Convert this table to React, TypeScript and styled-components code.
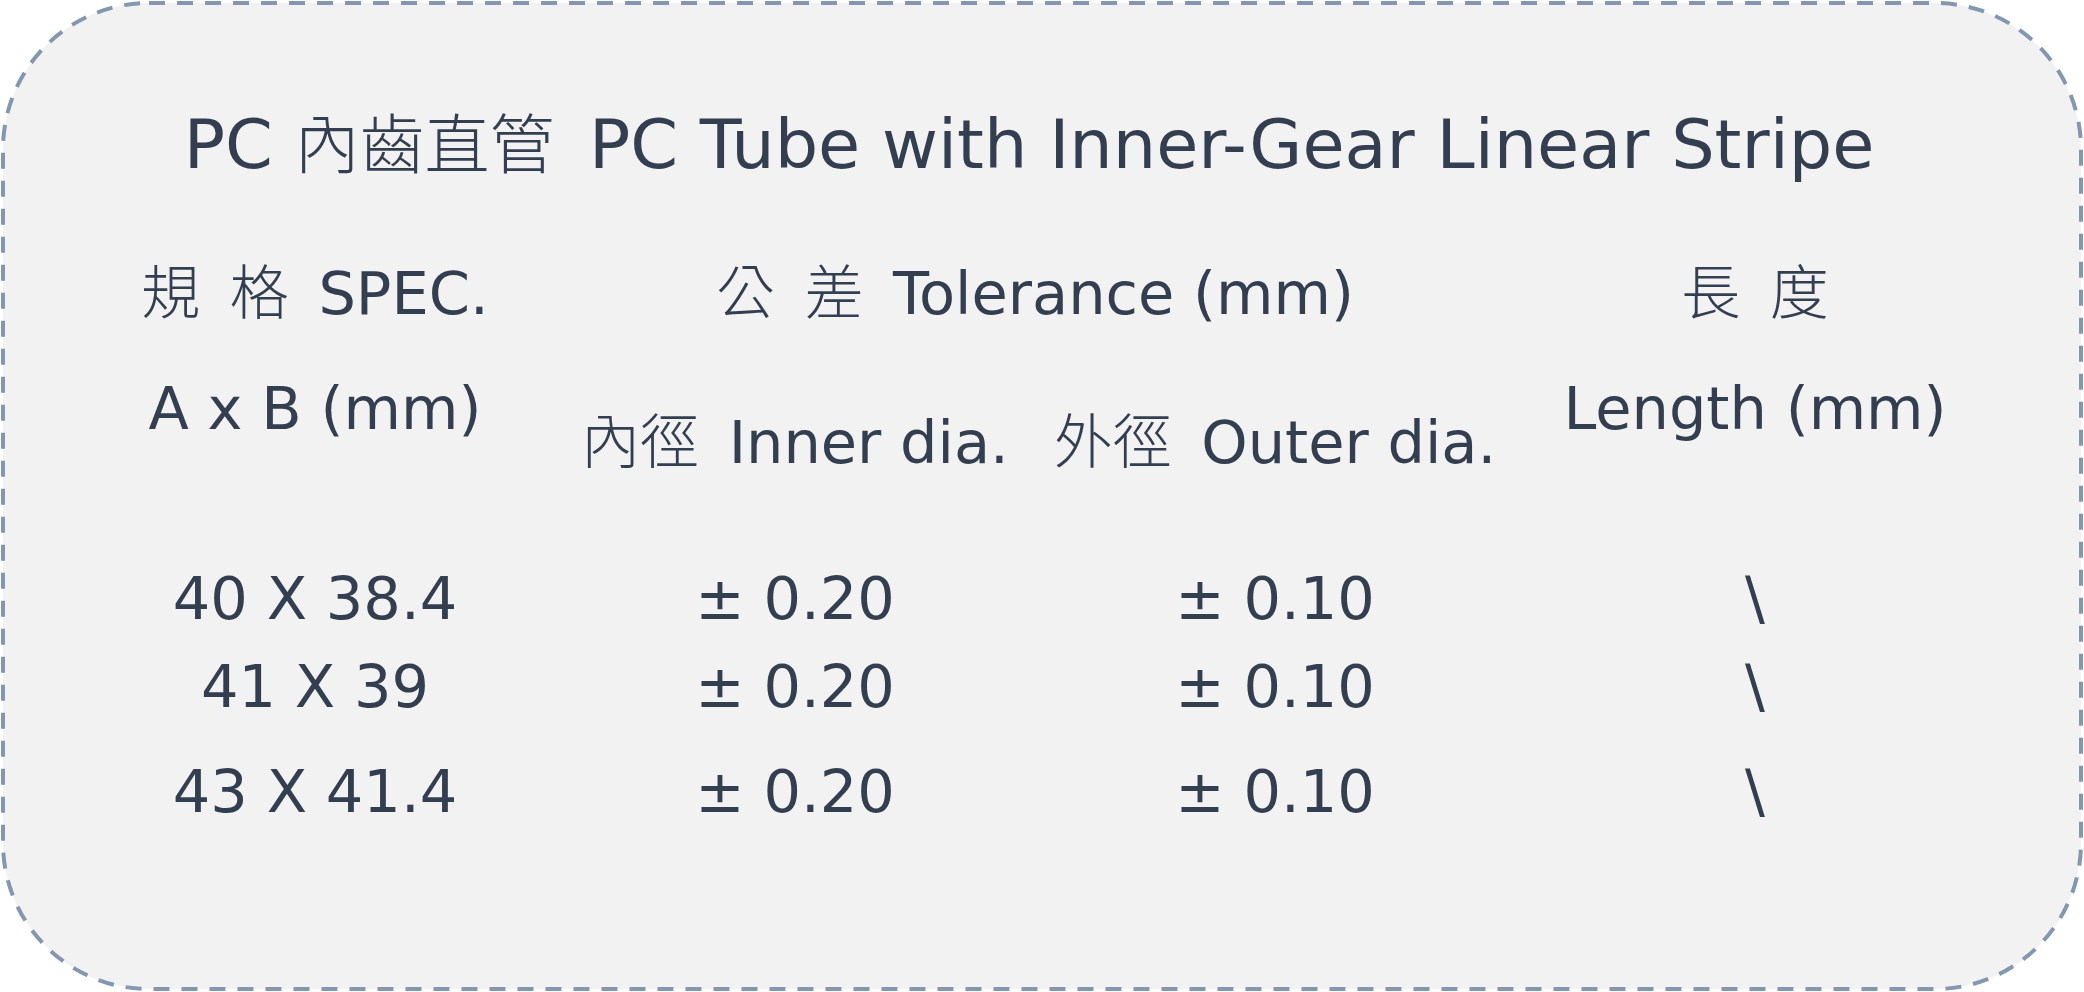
import styled, { createGlobalStyle } from "styled-components"

const GlobalStyle = createGlobalStyle`
  html, body {
    margin: 0;
    padding: 0;
    background: #ffffff;
  }
  body {
    font-family: "DejaVu Sans", Verdana, "Noto Sans CJK TC", sans-serif;
    color: #333f50;
  }
`

// dashed outline drawn as svg so the dash length matches the long dashes of the original
const outline = encodeURIComponent(
  `<svg xmlns="http://www.w3.org/2000/svg" width="2084" height="992"><rect x="3" y="3" width="2078" height="986" rx="146" ry="146" fill="#f2f2f2" stroke="#8497b0" stroke-width="4" stroke-dasharray="16 12"/></svg>`,
)

const Card = styled.section`
  box-sizing: border-box;
  width: 2084px;
  height: 992px;
  background: url("data:image/svg+xml,${outline}") no-repeat;
  padding: 110px 14px 0 0;
  display: flex;
  flex-direction: column;
  align-items: center;
`

const Title = styled.h1`
  margin: 0 12px 0 0;
  font-size: 68.5px;
  line-height: 68px;
  font-weight: 400;
  white-space: pre;
`

const Han = styled.span`
  font-family: "Noto Sans CJK TC", sans-serif;
  font-weight: 300;
  line-height: 0;
`

const TitleHan = styled(Han)`
  font-size: 65px;
`

const SpecTable = styled.div`
  margin-top: 86px;
  display: grid;
  grid-template-columns: repeat(4, 480px);
  grid-template-rows: 59px 56px 93px;
  font-size: 59px;
  line-height: 59px;
`

const Cell = styled.div<{ $col: string; $row: string; $offset?: number }>`
  grid-column: ${({ $col }) => $col};
  grid-row: ${({ $row }) => $row};
  padding-top: ${({ $offset }) => $offset ?? 0}px;
  text-align: center;
  white-space: pre;
`

const Body = styled.div`
  margin-top: 97px;
  display: flex;
  flex-direction: column;
  font-size: 59px;
  line-height: 59px;
`

const DataRow = styled.div<{ $height: number }>`
  display: grid;
  grid-template-columns: repeat(4, 480px);
  height: ${({ $height }) => $height}px;
`

const Value = styled.div`
  text-align: center;
  white-space: pre;
`

const rows = [
  { spec: "40 X 38.4", inner: "± 0.20", outer: "± 0.10", length: "\\", height: 88 },
  { spec: "41 X 39", inner: "± 0.20", outer: "± 0.10", length: "\\", height: 105 },
  { spec: "43 X 41.4", inner: "± 0.20", outer: "± 0.10", length: "\\", height: 59 },
]

const gap = "\u2002"

export default function App() {
  return (
    <>
      <GlobalStyle />
      <Card>
        <Title>
          PC <TitleHan>內齒直管</TitleHan>{gap}PC Tube with Inner-Gear Linear Stripe
        </Title>

        <SpecTable>
          <Cell $col="1" $row="1">
            <Han>規</Han>{gap}<Han>格</Han>{gap}SPEC.
          </Cell>
          <Cell $col="1" $row="3">A x B (mm)</Cell>
          <Cell $col="2 / span 2" $row="1">
            <Han>公</Han>{gap}<Han>差</Han>{gap}Tolerance (mm)
          </Cell>
          <Cell $col="2" $row="3" $offset={34}>
            <Han>內徑</Han>{gap}Inner dia.
          </Cell>
          <Cell $col="3" $row="3" $offset={34}>
            <Han>外徑</Han>{gap}Outer dia.
          </Cell>
          <Cell $col="4" $row="1">
            <Han>長</Han>{gap}<Han>度</Han>
          </Cell>
          <Cell $col="4" $row="3">Length (mm)</Cell>
        </SpecTable>

        <Body>
          {rows.map((r) => (
            <DataRow key={r.spec} $height={r.height}>
              <Value>{r.spec}</Value>
              <Value>{r.inner}</Value>
              <Value>{r.outer}</Value>
              <Value>{r.length}</Value>
            </DataRow>
          ))}
        </Body>
      </Card>
    </>
  )
}
